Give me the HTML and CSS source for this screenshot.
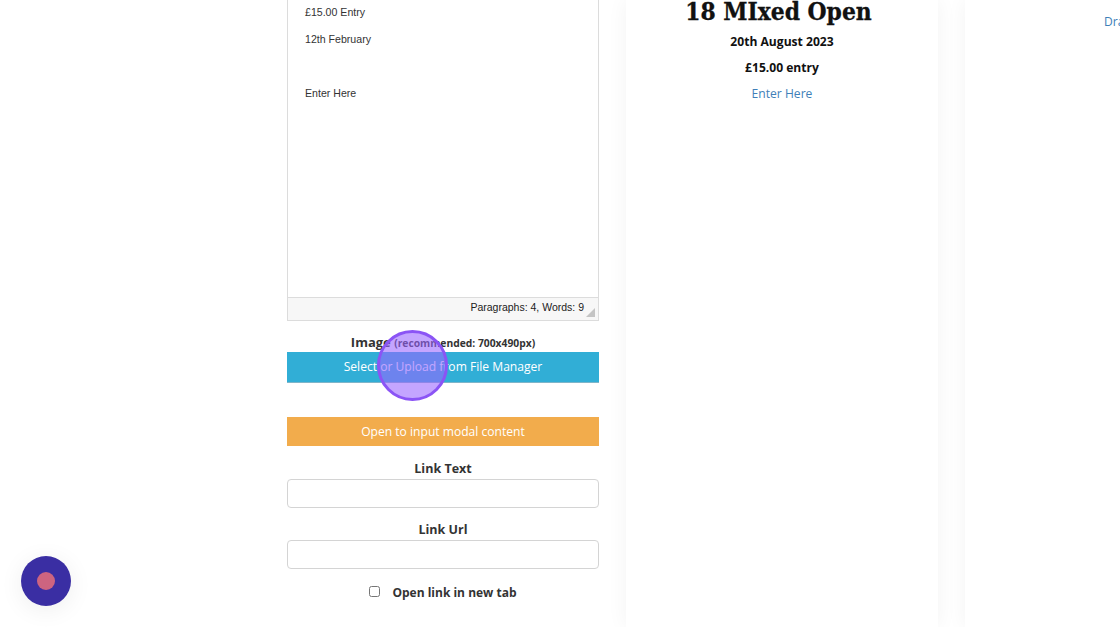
FILE: index.html
```html
<!DOCTYPE html>
<html>
<head>
  <title>Edit Event</title>
  <link rel="stylesheet" href="styles.css">
</head>
<body>
  <div class="page">
    <div class="form-col">
      <div class="editor">
        <div class="editor-body">
          <p>£15.00 Entry</p>
          <p>12th February</p>
          <p class="spaced">Enter Here</p>
        </div>
        <div class="editor-status">
          <span>Paragraphs: 4, Words: 9</span>
          <svg class="resize-grip" width="9" height="9" viewBox="0 0 9 9"><polygon points="9,0 9,9 0,9" fill="#c4c4c4"/></svg>
        </div>
      </div>

      <div class="image-label">Image <small>(recommended: 700x490px)</small></div>
      <button class="btn btn-blue">Select or Upload from File Manager</button>
      <button class="btn btn-orange">Open to input modal content</button>

      <label class="field-label">Link Text</label>
      <input class="field-input" type="text">
      <label class="field-label">Link Url</label>
      <input class="field-input" type="text">

      <div class="check-row">
        <input class="check-box" type="checkbox">
        <span>Open link in new tab</span>
      </div>
    </div>

    <div class="card">
      <h2>18 MIxed Open</h2>
      <p class="strong">20th August 2023</p>
      <p class="strong">£15.00 entry</p>
      <p><a href="#">Enter Here</a></p>
    </div>

    <div class="card card-side">
      <p class="cut-line"><a href="#">Enter Here</a></p>
      <p><a href="#">Draw</a></p>
    </div>
  </div>

  <div class="click-ring"></div>
  <div class="launcher"><span class="launcher-dot"></span></div>
</body>
</html>
```

FILE: styles.css
```css
html, body {
  margin: 0;
  padding: 0;
  height: 627px;
  overflow: hidden;
  background-color: #fff;
  font-family: "Open Sans", Arial, sans-serif;
  color: #333;
}

.page {
  display: flex;
  gap: 27px;
  padding-left: 287px;
  height: 627px;
}

/* left column, the form */
.form-col {
  width: 312px;
  flex-shrink: 0;
  display: flex;
  flex-direction: column;
  align-items: center;
}

.editor {
  width: 100%;
  box-sizing: border-box;
  height: 321px;
  border: 1px solid #dcdcdc;
  border-top: none;
  display: flex;
  flex-direction: column;
}

.editor-body {
  flex: 1;
  padding: 5px 17px 0;
  font-family: "Liberation Sans", Arial, sans-serif;
  font-size: 10.6px;
  line-height: 14px;
  color: #333;
}

.editor-body p {
  margin: 0 0 13px;
}

.editor-body .spaced {
  margin-top: 40px;
}

.editor-status {
  height: 22px;
  border-top: 1px solid #dcdcdc;
  background-color: #f7f7f7;
  display: flex;
  justify-content: flex-end;
  padding: 0 14px 0 0;
  font-family: "Liberation Sans", Arial, sans-serif;
  font-size: 10.5px;
  line-height: 18px;
  color: #222;
  position: relative;
}

.resize-grip {
  position: absolute;
  right: 3px;
  bottom: 3px;
}

.image-label {
  margin-top: 12px;
  height: 19px;
  font-size: 13px;
  font-weight: 700;
  line-height: 18px;
}

.image-label small {
  font-size: 10.3px;
  font-weight: 700;
}

.btn {
  display: block;
  width: 100%;
  border: none;
  color: #fff;
  font-family: "Open Sans", Arial, sans-serif;
  font-size: 12.1px;
  padding: 0 0 2px;
}

.btn-blue {
  height: 31px;
  background-color: #31aed6;
  border-bottom: 1px solid #7fb5c9;
  margin-bottom: 34px;
}

.btn-orange {
  height: 29px;
  background-color: #f2ac4c;
  padding-bottom: 0;
  margin-bottom: 13px;
}

.field-label {
  font-size: 12.5px;
  font-weight: 700;
  line-height: 18px;
  padding-top: 1px;
  margin-bottom: 1px;
}

.field-input {
  width: 100%;
  box-sizing: border-box;
  height: 29px;
  border: 1px solid #d4d4d4;
  border-radius: 4px;
  margin: 0 0 12px;
}

.check-row {
  display: flex;
  align-items: center;
  gap: 12px;
  margin-top: 3px;
  font-size: 12px;
  font-weight: 700;
  line-height: 18px;
}

.check-box {
  width: 11px;
  height: 11px;
  margin: 0 0 3px;
}

/* preview cards */
.card {
  width: 312px;
  flex-shrink: 0;
  box-sizing: border-box;
  text-align: center;
  color: #111;
  font-size: 12.1px;
  box-shadow: 0 0 20px rgba(0, 0, 0, 0.05);
}

.card h2 {
  font-family: "DejaVu Serif Condensed", "DejaVu Serif", serif;
  font-size: 24.3px;
  font-weight: 700;
  -webkit-text-stroke: 0.3px #111;
  line-height: 30px;
  margin: -3px 0 6px -7px;
}

.card p {
  margin: 0 0 8px;
  line-height: 18px;
}

.card .strong {
  font-weight: 700;
}

.card a {
  color: #3f7fb8;
  text-decoration: none;
}

.card-side .cut-line {
  margin-top: -13px;
  margin-bottom: 8px;
  padding-right: 4px;
}

.card-side p {
  padding-right: 4px;
}

/* tutorial overlays */
.click-ring {
  position: absolute;
  left: 376.5px;
  top: 329.5px;
  width: 71px;
  height: 71px;
  box-sizing: border-box;
  border: 3px solid #8b54f5;
  border-radius: 50%;
  background-color: rgba(153, 100, 255, 0.58);
}

.launcher {
  position: absolute;
  left: 21px;
  top: 556px;
  width: 50px;
  height: 50px;
  border-radius: 50%;
  background-color: #3a2ea3;
  box-shadow: 0 4px 24px rgba(0, 0, 0, 0.07);
  display: flex;
  align-items: center;
  justify-content: center;
}

.launcher-dot {
  width: 18px;
  height: 18px;
  border-radius: 50%;
  background-color: #cd6480;
}
```
